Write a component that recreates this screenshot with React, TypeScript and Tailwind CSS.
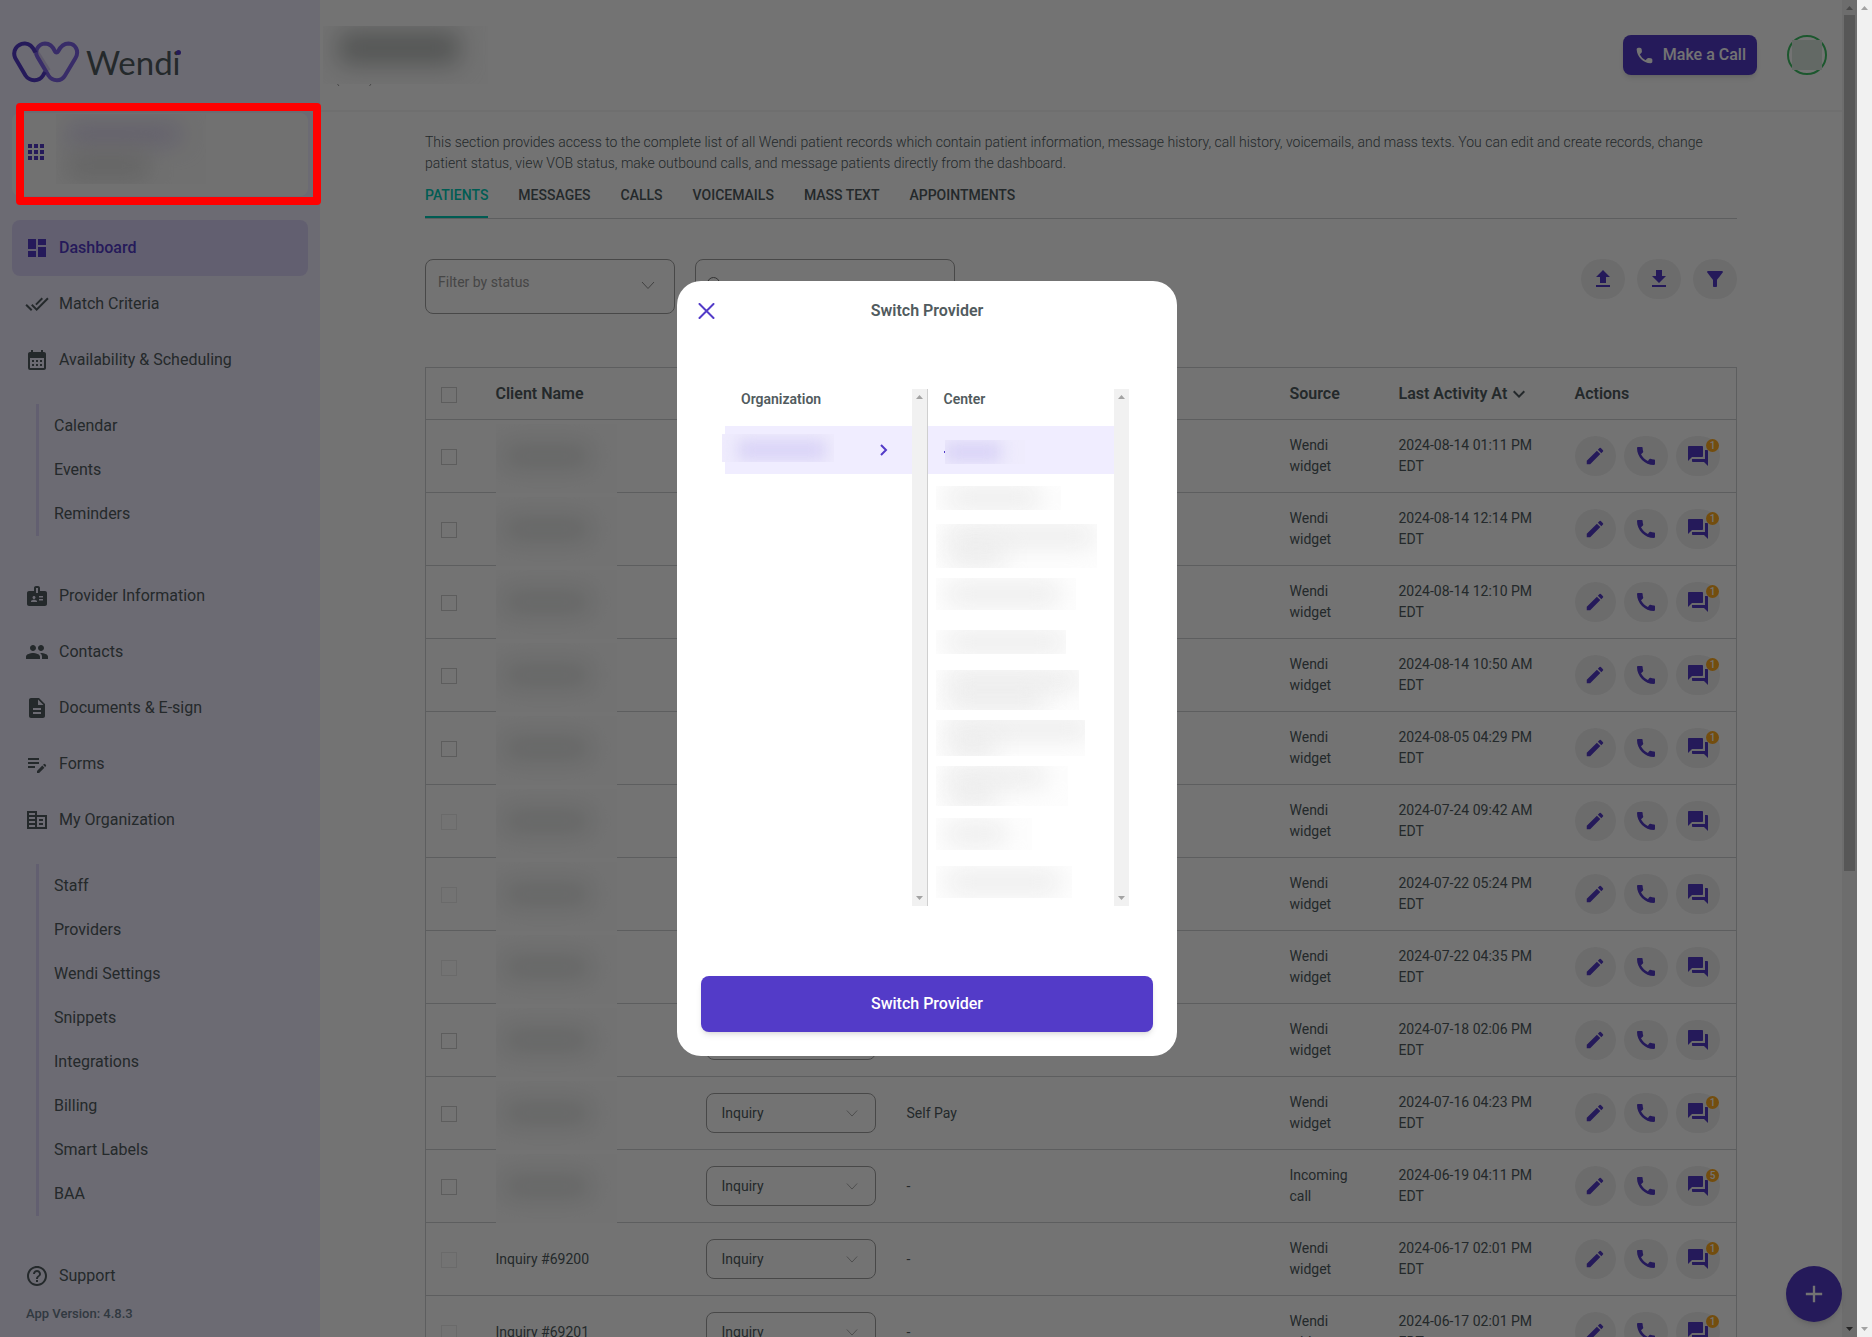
import type { ReactNode } from "react";
import {
	MdAdd,
	MdApps,
	MdBadge,
	MdCalendarMonth,
	MdCall,
	MdDashboard,
	MdDescription,
	MdDoneAll,
	MdDownload,
	MdEdit,
	MdEditNote,
	MdExpandMore,
	MdFilterAlt,
	MdForum,
	MdHelpOutline,
	MdOutlineCorporateFare,
	MdPeople,
	MdUpload,
} from "react-icons/md";

const SCHEDULING = ["Calendar", "Events", "Reminders"];

const ORGANIZATION = [
	"Staff",
	"Providers",
	"Wendi Settings",
	"Snippets",
	"Integrations",
	"Billing",
	"Smart Labels",
	"BAA",
];

const TABS = [
	"Patients",
	"Messages",
	"Calls",
	"Voicemails",
	"Mass text",
	"Appointments",
];

type Patient = {
	id: number;
	name?: string;
	payer: string;
	source: string;
	activity: string;
	unread?: number;
	locked?: boolean;
};

const PATIENTS: Patient[] = [
	{ id: 1, payer: "-", source: "Wendi widget", activity: "2024-08-14 01:11 PM EDT", unread: 1 },
	{ id: 2, payer: "-", source: "Wendi widget", activity: "2024-08-14 12:14 PM EDT", unread: 1 },
	{ id: 3, payer: "-", source: "Wendi widget", activity: "2024-08-14 12:10 PM EDT", unread: 1 },
	{ id: 4, payer: "-", source: "Wendi widget", activity: "2024-08-14 10:50 AM EDT", unread: 1 },
	{ id: 5, payer: "-", source: "Wendi widget", activity: "2024-08-05 04:29 PM EDT", unread: 1 },
	{ id: 6, payer: "-", source: "Wendi widget", activity: "2024-07-24 09:42 AM EDT", locked: true },
	{ id: 7, payer: "-", source: "Wendi widget", activity: "2024-07-22 05:24 PM EDT", locked: true },
	{ id: 8, payer: "-", source: "Wendi widget", activity: "2024-07-22 04:35 PM EDT", locked: true },
	{ id: 9, payer: "-", source: "Wendi widget", activity: "2024-07-18 02:06 PM EDT" },
	{ id: 10, payer: "Self Pay", source: "Wendi widget", activity: "2024-07-16 04:23 PM EDT", unread: 1 },
	{ id: 11, payer: "-", source: "Incoming call", activity: "2024-06-19 04:11 PM EDT", unread: 5 },
	{ id: 12, name: "Inquiry #69200", payer: "-", source: "Wendi widget", activity: "2024-06-17 02:01 PM EDT", unread: 1, locked: true },
	{ id: 13, name: "Inquiry #69201", payer: "-", source: "Wendi widget", activity: "2024-06-17 02:01 PM EDT", unread: 1, locked: true },
];

// Redacted center names: outer box and the soft bars inside it
const CENTERS = [
	{ box: "w-[125px] h-6", bars: ["w-[90px]"] },
	{ box: "w-[161px] h-11", bars: ["w-[145px]", "w-14"] },
	{ box: "w-[140px] h-8", bars: ["w-[110px]"] },
	{ box: "w-[130px] h-6", bars: ["w-[115px]"] },
	{ box: "w-[143px] h-10", bars: ["w-[130px]", "w-24"] },
	{ box: "w-[149px] h-9", bars: ["w-[140px]", "w-12"] },
	{ box: "w-[132px] h-10", bars: ["w-24", "w-12"] },
	{ box: "w-24 h-8", bars: ["w-14"] },
	{ box: "w-[136px] h-8", bars: ["w-[110px]"] },
];

function Logo() {
	return (
		<a href="#home" aria-label="Wendi" className="flex items-center gap-1.5 text-[#505b60]">
			<svg width="68" height="42" viewBox="0 0 68 42" fill="none" strokeWidth="4" strokeLinejoin="round">
				<path d="M22 8 36 30" stroke="#d5cdee" strokeWidth="6" />
				<path
					d="M46 10.500C45.300 11.800 43.700 11.800 43 10.500C40.500 4.500 37 2.500 33 2.500C26 3 22 10 25.500 16L36.500 34.500C40.500 40.800 49.500 40.800 53 34.500L63.500 17C67.500 10 63.500 2.800 56.500 2.500C52 2.500 49 4.500 46 10.500Z"
					stroke="#7c62e6"
				/>
				<path
					d="M23.500 11.500C20.500 5 16.500 2.200 12.500 2.500C4.500 3 .2 10 3.200 17L13.500 34.500C17.500 40.500 27 41 31 34.500L33 31"
					stroke="#533bc8"
				/>
			</svg>
			<span className="relative font-[Lato,sans-serif] text-[33px] leading-10">
				Wendi
				<span className="absolute right-0 top-2 size-[5px] rounded-full bg-[#533bc8]" />
			</span>
		</a>
	);
}

function NavItem({ icon, label, active }: { icon: ReactNode; label: string; active?: boolean }) {
	return (
		<a
			href="#nav"
			className={
				active
					? "h-14 shrink-0 flex items-center gap-2.5 pl-[13px] rounded-lg bg-[#dad3f9] font-medium text-[#533bc8]"
					: "h-14 shrink-0 flex items-center gap-2.5 pl-[13px] text-[#505b60]"
			}
		>
			{icon}
			{label}
		</a>
	);
}

function SubMenu({ items }: { items: string[] }) {
	return (
		<ul className="mt-4 mb-8 ml-6 border-l-3 border-[#dad3f9]">
			{items.map((item) => (
				<li key={item}>
					<a href="#sub" className="h-11 flex items-center pl-[15px]">
						{item}
					</a>
				</li>
			))}
		</ul>
	);
}

function Sidebar() {
	return (
		<nav className="w-80 shrink-0 h-full overflow-hidden flex flex-col px-3 bg-[#f0edff] text-[#505b60]">
			<div className="pt-[41px] pb-[30px]">
				<Logo />
			</div>
			<button
				type="button"
				aria-label="Switch provider"
				className="h-[83px] shrink-0 flex items-center gap-2 pl-3 mb-6 rounded-lg bg-[#fbfbfb] text-[#533bc8]"
			>
				<MdApps className="size-6 mb-1.5" />
				<span className="h-[70px] w-[150px] overflow-hidden flex flex-col gap-3 px-3 pt-3 mb-3 bg-[#f8f8f8]">
					<span className="h-4 w-28 bg-[#d3cbee] blur-md" />
					<span className="h-6 w-20 bg-[#dcdcdc] blur-md" />
				</span>
			</button>
			<NavItem active icon={<MdDashboard className="size-6" />} label="Dashboard" />
			<NavItem icon={<MdDoneAll className="size-6" />} label="Match Criteria" />
			<NavItem icon={<MdCalendarMonth className="size-6" />} label="Availability & Scheduling" />
			<SubMenu items={SCHEDULING} />
			<NavItem icon={<MdBadge className="size-6" />} label="Provider Information" />
			<NavItem icon={<MdPeople className="size-6" />} label="Contacts" />
			<NavItem icon={<MdDescription className="size-6" />} label="Documents & E-sign" />
			<NavItem icon={<MdEditNote className="size-6" />} label="Forms" />
			<NavItem icon={<MdOutlineCorporateFare className="size-6" />} label="My Organization" />
			<SubMenu items={ORGANIZATION} />
			<NavItem icon={<MdHelpOutline className="size-6" />} label="Support" />
			<div className="pl-3.5 text-[13px] leading-5 font-medium text-[#6d7f8f]">App Version: 4.8.3</div>
		</nav>
	);
}

function Header() {
	return (
		<header className="h-28 shrink-0 flex justify-between border-b-2 border-[#f6f6f6] pl-[3px] pr-[15px]">
			<div className="pt-[26px]">
				<div className="h-[58px] w-[165px] overflow-hidden pl-4 pt-1.5 bg-[#fcfcfc]">
					<div className="h-8 w-[120px] bg-[#b8bcba] blur-md" />
				</div>
				<svg width="50" height="3" viewBox="0 0 50 3" fill="none" stroke="#a0a0a0">
					<path d="M14.500 0 16 2M48 0 46.500 2" />
				</svg>
			</div>
			<div className="flex items-start gap-[30px] pt-[35px]">
				<button
					type="button"
					className="h-10 flex items-center gap-2 px-[11px] rounded-lg bg-[#533bc8] text-white font-medium shadow-md"
				>
					<svg className="size-[21px]" viewBox="0 0 24 24" fill="currentColor">
						<path d="M19.23 15.26l-2.54-.29a1.99 1.99 0 0 0-1.64.57l-1.84 1.84a15.045 15.045 0 0 1-6.59-6.59l1.85-1.85c.43-.43.64-1.03.57-1.64l-.29-2.52a2.001 2.001 0 0 0-1.99-1.77H5.03c-1.13 0-2.07.94-2 2.07.53 8.54 7.36 15.36 15.89 15.89 1.13.07 2.07-.87 2.07-2v-1.73c.01-1.01-.75-1.86-1.76-1.98z" />
					</svg>
					Make a Call
				</button>
				<button
					type="button"
					aria-label="Account"
					className="size-10 flex items-center justify-center rounded-full border-2 border-[#3fc266]"
				>
					<span className="size-[30px] shrink-0 bg-[#dce8df]" />
				</button>
			</div>
		</header>
	);
}

function Chevron({ className }: { className: string }) {
	return (
		<svg className={className} width="14" height="9" viewBox="0 0 14 9" fill="none" stroke="currentColor">
			<path d="M1 1 7 7.500 13 1" />
		</svg>
	);
}

function RoundButton({ label, children, narrow }: { label: string; children: ReactNode; narrow?: boolean }) {
	return (
		<button
			type="button"
			aria-label={label}
			className={
				narrow
					? "relative h-10 w-[42px] flex items-center justify-center rounded-full bg-[#f0f0f0] text-[#533bc8]"
					: "relative h-10 w-11 flex items-center justify-center rounded-full bg-[#f0f0f0] text-[#533bc8]"
			}
		>
			{children}
		</button>
	);
}

function Checkbox({ label, faint }: { label: string; faint?: boolean }) {
	return (
		<input
			type="checkbox"
			aria-label={label}
			disabled={faint}
			className={
				faint
					? "block appearance-none size-4 mt-0.5 border border-[#ebebeb]"
					: "block appearance-none size-4 mt-0.5 border border-[#cfcfcf]"
			}
		/>
	);
}

function PatientRow({ patient }: { patient: Patient }) {
	return (
		<tr className="h-[73px] border-b border-[#cfd1d2]">
			<td className="px-[15px]">
				<Checkbox label={`Select patient ${patient.id}`} faint={patient.locked} />
			</td>
			<td className="relative px-4">
				{patient.name ?? (
					<div className="absolute left-4 top-1 -bottom-px w-[121px] overflow-hidden pt-5 pl-2 bg-[#fdfdfd]">
						<div className="h-6 w-[86px] bg-[#dfe1e0] blur-md" />
					</div>
				)}
			</td>
			<td className="px-4">
				<div className="relative w-[170px]">
					<select
						aria-label={`Status of patient ${patient.id}`}
						className="h-10 w-full appearance-none rounded-lg border border-[#a0a0a0] px-[15px]"
					>
						<option>Inquiry</option>
					</select>
					<Chevron className="absolute right-[18px] top-4 w-3 text-[#a0a0a0]" />
				</div>
			</td>
			<td className="px-4">{patient.payer}</td>
			<td className="pl-4 pr-8">{patient.source}</td>
			<td className="px-4">{patient.activity}</td>
			<td className="px-4">
				<div className="flex gap-2">
					<RoundButton narrow label="Edit">
						<MdEdit className="size-[22px]" />
					</RoundButton>
					<RoundButton label="Call">
						<MdCall className="size-6" />
					</RoundButton>
					<RoundButton label="Messages">
						<MdForum className="size-6" />
						{patient.unread && (
							<span className="absolute right-px top-[3px] size-[13px] rounded-full bg-[#ffab1f] text-center text-[10px] leading-[13px] font-medium text-white">
								{patient.unread}
							</span>
						)}
					</RoundButton>
				</div>
			</td>
		</tr>
	);
}

function PatientTable() {
	return (
		<table className="mt-[53px] w-full table-fixed border-collapse border border-[#cfd1d2] text-left text-sm leading-[21px] text-[#505b60]">
			<colgroup>
				<col className="w-[54px]" />
				<col className="w-[210px]" />
				<col className="w-[201px]" />
				<col />
				<col className="w-[109px]" />
				<col className="w-[176px]" />
				<col className="w-[178px]" />
			</colgroup>
			<thead>
				<tr className="h-[52px] border-b border-[#cfd1d2] text-base">
					<th className="px-[15px]">
						<Checkbox label="Select all" />
					</th>
					<th className="px-4 font-semibold">Client Name</th>
					<th className="px-4 font-semibold">Status</th>
					<th className="px-4 font-semibold">Payer</th>
					<th className="px-4 font-semibold">Source</th>
					<th className="px-4 font-semibold">
						<span className="flex items-center">
							Last Activity At
							<MdExpandMore className="size-6" />
						</span>
					</th>
					<th className="px-4 font-semibold">Actions</th>
				</tr>
			</thead>
			<tbody>
				{PATIENTS.map((patient) => (
					<PatientRow key={patient.id} patient={patient} />
				))}
			</tbody>
		</table>
	);
}

function Dashboard() {
	return (
		<main className="flex-1 overflow-hidden px-[105px] pt-5">
			<p className="text-sm leading-[21px] font-light text-[#505b60]">
				This section provides access to the complete list of all Wendi patient records which contain patient
				information, message history, call history, voicemails, and mass texts. You can edit and create records,
				change patient status, view VOB status, make outbound calls, and message patients directly from the dashboard.
			</p>
			<div role="tablist" className="mt-2 flex gap-[30px] border-b border-[#cfd1d2]">
				{TABS.map((tab, i) => (
					<button
						key={tab}
						type="button"
						role="tab"
						aria-selected={i === 0}
						className={
							i === 0
								? "h-9 pb-2 border-b-2 border-[#00cdb9] text-sm font-medium uppercase text-[#00cdb9]"
								: "h-9 pb-2.5 text-sm font-medium uppercase text-[#505b60]"
						}
					>
						{tab}
					</button>
				))}
			</div>
			<div className="mt-10 flex gap-5">
				<div className="relative w-[250px]">
					<select
						aria-label="Filter by status"
						className="h-[55px] w-full appearance-none rounded-lg border border-[#a0a0a0] px-3 pb-2.5 text-sm text-[#9b9b9b]"
					>
						<option>Filter by status</option>
					</select>
					<Chevron className="absolute right-5 top-[22px] text-[#909090]" />
				</div>
				<div className="relative w-[260px]">
					<input
						type="search"
						aria-label="Search"
						className="h-[55px] w-full rounded-lg border border-[#a0a0a0] pl-8"
					/>
					<svg
						className="absolute left-3 top-[18px]"
						width="14"
						height="14"
						viewBox="0 0 14 14"
						fill="none"
						stroke="#707070"
					>
						<circle cx="6.500" cy="6.500" r="6" />
					</svg>
				</div>
				<div className="ml-auto flex gap-3">
					<RoundButton label="Upload">
						<MdUpload className="size-6" />
					</RoundButton>
					<RoundButton label="Download">
						<MdDownload className="size-6" />
					</RoundButton>
					<RoundButton label="Filter">
						<MdFilterAlt className="size-6" />
					</RoundButton>
				</div>
			</div>
			<PatientTable />
		</main>
	);
}

function ScrollArrow({ className, down }: { className: string; down?: boolean }) {
	return (
		<svg className={className} width="15" height="15" viewBox="0 0 15 15" fill="currentColor">
			{down ? <path d="M4 5h7l-3.500 4z" /> : <path d="M4 10h7L7.500 6z" />}
		</svg>
	);
}

function ScrollTrack() {
	return (
		<div className="w-[15px] shrink-0 flex flex-col justify-between bg-[#f1f1f1] text-[#a3a3a3]">
			<ScrollArrow className="block" />
			<ScrollArrow down className="block" />
		</div>
	);
}

function SwitchProviderDialog() {
	return (
		<div
			role="dialog"
			aria-label="Switch Provider"
			className="w-[500px] flex flex-col rounded-3xl bg-white px-6 pb-6 text-[#515b5e]"
		>
			<div className="h-[108px] flex items-start justify-between pt-[18px]">
				<button type="button" aria-label="Close" className="w-6 pt-1 text-[#533bc8]">
					<svg
						className="-ml-1"
						width="20"
						height="16"
						viewBox="0 0 20 16"
						fill="none"
						stroke="currentColor"
						strokeWidth="2"
						strokeLinecap="round"
					>
						<path d="m2.500 1 14 14M16.500 1 2.500 15" />
					</svg>
				</button>
				<h2 className="font-semibold">Switch Provider</h2>
				<span className="w-6" />
			</div>
			<div className="mx-6 h-[517px] flex">
				<section className="flex-1 flex border-r border-[#cfcfcf]">
					<div className="flex-1">
						<h3 className="h-[37px] pl-4 text-sm font-semibold">Organization</h3>
						<button
							type="button"
							aria-label="Organization"
							className="h-12 w-full flex items-center justify-between pr-6 bg-[#f0edff] text-[#533bc8]"
						>
							<span className="h-7 w-[112px] -ml-[3px] mb-1 overflow-hidden pl-4 pt-1.5 bg-[#efecfd]">
								<span className="block h-5 w-[88px] bg-[#d8d2f6] blur-sm" />
							</span>
							<svg width="8" height="12" viewBox="0 0 8 12" fill="none" stroke="currentColor" strokeWidth="2">
								<path d="m1 1 5 5-5 5" />
							</svg>
						</button>
					</div>
					<ScrollTrack />
				</section>
				<section className="flex-1 flex">
					<div className="flex-1">
						<h3 className="h-[37px] pl-4 text-sm font-semibold">Center</h3>
						<button
							type="button"
							aria-label="Selected center"
							className="h-12 w-full flex items-center pl-4 pt-1 bg-[#f0edff]"
						>
							<span className="w-px h-0.5 bg-[#533bc8]" />
							<span className="h-6 w-20 overflow-hidden pt-0.5 bg-[#efecfd]">
								<span className="block h-5 w-14 bg-[#d8d2f6] blur-sm" />
							</span>
						</button>
						<ul>
							{CENTERS.map((center, i) => (
								<li key={i} className="h-12 flex items-center pl-2">
									<div className={`${center.box} overflow-hidden flex flex-col justify-center gap-1 pl-3 bg-[#fdfdfd]`}>
										{center.bars.map((bar) => (
											<div key={bar} className={`${bar} h-4 bg-[#e6e6e6] blur-md`} />
										))}
									</div>
								</li>
							))}
						</ul>
					</div>
					<ScrollTrack />
				</section>
			</div>
			<button type="button" className="mt-[70px] h-14 rounded-lg bg-[#533bc8] text-white font-medium shadow-md">
				Switch Provider
			</button>
		</div>
	);
}

export default function App() {
	return (
		<div className="h-screen flex overflow-hidden bg-white font-[Roboto,sans-serif] text-base">
			<div className="relative flex-1 flex overflow-hidden">
				<Sidebar />
				<div className="flex-1 flex flex-col overflow-hidden">
					<Header />
					<Dashboard />
				</div>
				<div className="w-[15px] shrink-0 flex flex-col bg-[#f1f1f1]">
					<ScrollArrow className="text-[#a3a3a3]" />
					<div className="mx-0.5 h-[64%] bg-[#c1c1c1]" />
					<ScrollArrow down className="mt-auto text-[#505050]" />
				</div>
				<button
					type="button"
					aria-label="Add"
					className="absolute right-[15px] bottom-[15px] size-14 flex items-center justify-center rounded-full bg-[#533bc8] text-white shadow-md"
				>
					<MdAdd className="size-7" />
				</button>
				<div className="absolute inset-0 flex items-center justify-center pr-[3px] bg-black/55">
					<SwitchProviderDialog />
				</div>
				<div className="absolute left-4 top-[103px] h-[102px] w-[305px] rounded-sm border-8 border-[#ff0000]" />
			</div>
			<ScrollTrack />
		</div>
	);
}
